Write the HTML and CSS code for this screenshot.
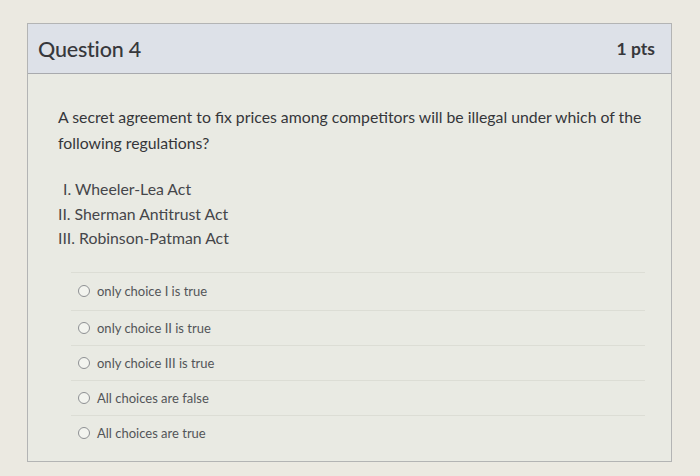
FILE: index.html
```html
<!DOCTYPE html>
<html>
<head>
<meta charset="utf-8">
<link rel="stylesheet" href="styles.css">
</head>
<body>
<div class="card">
  <div class="header">
    <span class="title">Question 4</span>
    <span class="pts">1 pts</span>
  </div>
  <div class="body">
    <p class="question">A secret agreement to fix prices among competitors will be illegal under which of the following regulations?</p>
    <div class="list">
      <div class="item-1">I. Wheeler-Lea Act</div>
      <div>II. Sherman Antitrust Act</div>
      <div>III. Robinson-Patman Act</div>
    </div>
    <div class="answers">
      <div class="answer"><span class="radio"></span>only choice I is true</div>
      <div class="answer"><span class="radio"></span>only choice II is true</div>
      <div class="answer"><span class="radio"></span>only choice III is true</div>
      <div class="answer"><span class="radio"></span>All choices are false</div>
      <div class="answer"><span class="radio"></span>All choices are true</div>
    </div>
  </div>
</div>
</body>
</html>
```
FILE: styles.css
```css
html, body {
  margin: 0;
  padding: 0;
}
body {
  background: #ebe9e1;
  font-family: Lato, "Open Sans", sans-serif;
  width: 700px;
  height: 476px;
  overflow: hidden;
  padding-top: 23px;
  box-sizing: border-box;
}
.card {
  margin-left: 27px;
  width: 645px;
  height: 439px;
  border: 1px solid #b3b4b4;
  background: #e9eae3;
  box-sizing: border-box;
}
.header {
  height: 50px;
  background: #dde1e8;
  border-bottom: 1px solid #a8aaae;
  display: flex;
  align-items: center;
  justify-content: space-between;
  padding: 0 16px 0 10px;
  box-sizing: border-box;
  color: #37383c;
}
.title {
  font-size: 21.5px;
  font-weight: 500;
  letter-spacing: -0.2px;
}
.pts {
  font-size: 17.5px;
  font-weight: 700;
}
.body {
  padding: 30px 20px 0 30px;
}
.question {
  margin: 0;
  font-size: 15.8px;
  line-height: 26px;
  color: #35363a;
}
.list {
  margin-top: 21px;
  font-size: 15.8px;
  line-height: 24.5px;
  color: #45464a;
}
.item-1 {
  padding-left: 5px;
}
.answers {
  margin-top: 21px;
  margin-left: 13px;
  margin-right: 6px;
}
.answer {
  height: 35px;
  border-top: 1px solid #dcddd5;
  display: flex;
  align-items: center;
  font-size: 13px;
  color: #535558;
  box-sizing: border-box;
  padding-left: 7px;
}
.answer:first-child {
  height: 38px;
}
.radio {
  width: 10px;
  height: 10px;
  border: 1.3px solid #8e9093;
  border-radius: 50%;
  margin-right: 7px;
  background: #f3f4ef;
  flex: none;
}
```
